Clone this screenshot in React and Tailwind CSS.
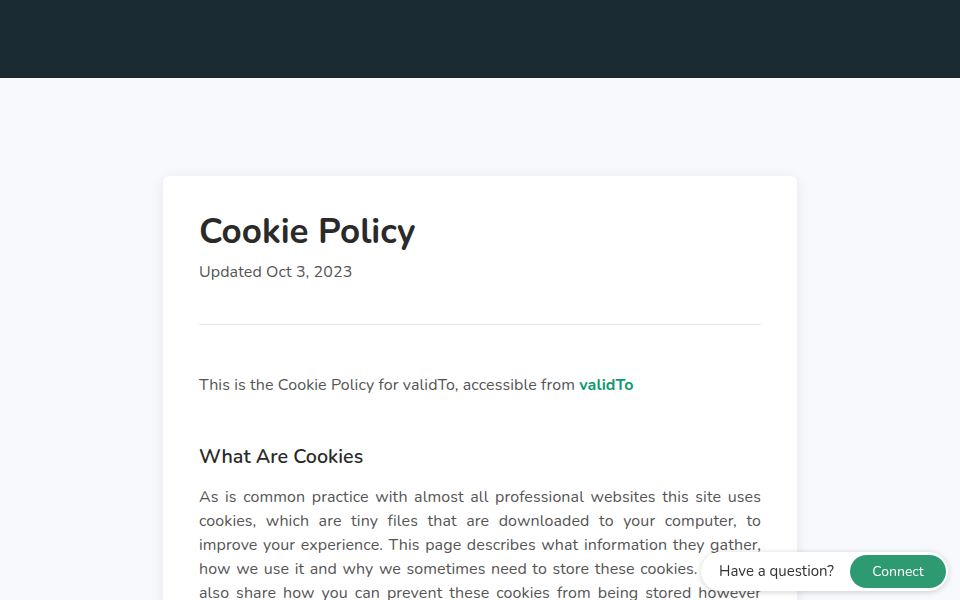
export default function App() {
  return (
    <div className="min-h-screen bg-[#f7f9fc] font-['Nunito','Lato','Noto_Sans',sans-serif] text-[#333]">
      <header className="h-[78px] bg-[#1a2b33]" />

      <main className="flex justify-center pt-[98px] pb-20">
        <article className="w-[634px] rounded-md bg-white px-9 pt-[32px] pb-10 shadow-[0_2px_14px_rgba(0,0,0,0.08)]">
          <h1 className="mt-[1px] text-[35px] font-bold leading-[46px] text-[#2a2a2a]">Cookie Policy</h1>
          <p className="mt-[5px] text-[16px] tracking-[0.1px] text-[#555]">Updated Oct 3, 2023</p>

          <hr className="mt-[40px] border-t border-[#e8e8e8]" />

          <p className="mt-[48px] text-[16px] tracking-[0.1px] text-[#555]">
            This is the Cookie Policy for validTo, accessible from{' '}
            <a href="#" className="font-bold text-[#0e9a6e]">validTo</a>
          </p>

          <h2 className="mt-[45px] text-[19.7px] font-semibold text-[#2a2a2a]">What Are Cookies</h2>
          <p className="mt-[13px] text-justify text-[16px] leading-[24px] tracking-[0.1px] text-[#555]">
            As is common practice with almost all professional websites this site uses cookies, which are tiny
            files that are downloaded to your computer, to improve your experience. This page describes what
            information they gather, how we use it and why we sometimes need to store these cookies. We will
            also share how you can prevent these cookies from being stored however this may downgrade or
            'break' certain elements of the sites functionality.
          </p>
        </article>
      </main>

      <div className="fixed bottom-[9px] right-[12px] flex items-center gap-[16px] rounded-full bg-white py-[3px] pl-[18px] pr-[2px] shadow-[0_1px_6px_rgba(0,0,0,0.18)]">
        <span className="text-[15px] text-[#333]">Have a question?</span>
        <button className="h-[33px] w-[96px] rounded-full bg-[#2e9a72] text-[14px] text-white">Connect</button>
      </div>
    </div>
  )
}
